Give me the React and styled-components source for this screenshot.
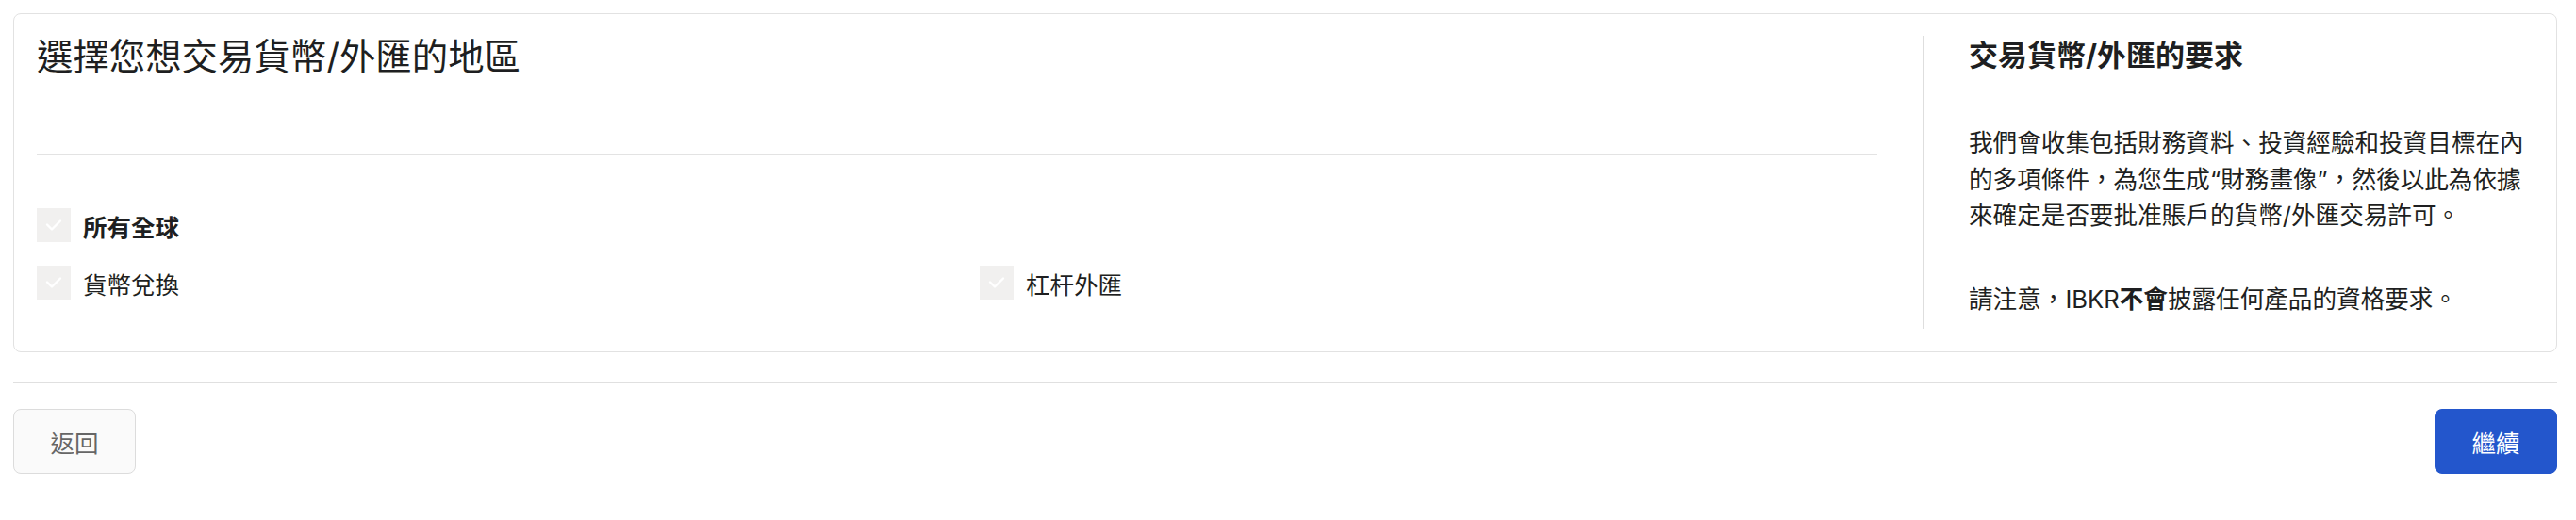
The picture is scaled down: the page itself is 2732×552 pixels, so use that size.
import React from "react";
import styled, { createGlobalStyle } from "styled-components";

const GlobalStyle = createGlobalStyle`
  html, body {
    margin: 0;
    background: #fff;
  }
  body {
    padding: 14px 20px 14px 14px;
    font-family: Inter, "Noto Sans CJK TC", sans-serif;
    color: #1e1f21;
  }
`;

const CheckIcon = () => (
  <svg width="18" height="14" viewBox="0 0 18 14" fill="none">
    <path d="M2 6.5 L7 11.5 L16 2.5" stroke="#fff" strokeWidth="2.4" strokeLinecap="round" strokeLinejoin="round" />
  </svg>
);

const Option = ({ label, bold }) => (
  <OptionRow>
    <Box>
      <CheckIcon />
    </Box>
    <OptionLabel bold={bold}>{label}</OptionLabel>
  </OptionRow>
);

const App = () => {
  return (
    <>
      <GlobalStyle />
      <Card>
        <Main>
          <Title>選擇您想交易貨幣/外匯的地區</Title>
          <Rule />
          <Options>
            <Option label="所有全球" bold />
            <OptionGrid>
              <Option label="貨幣兌換" />
              <Option label="杠杆外匯" />
            </OptionGrid>
          </Options>
        </Main>
        <VDivider />
        <Aside>
          <AsideTitle>交易貨幣/外匯的要求</AsideTitle>
          <Para>
            我們會收集包括財務資料、投資經驗和投資目標在內的多項條件，為您生成“財務畫像”，然後以此為依據來確定是否要批准賬戶的貨幣/外匯交易許可。
          </Para>
          <Para>
            請注意，IBKR<strong>不會</strong>披露任何產品的資格要求。
          </Para>
        </Aside>
      </Card>
      <Footer>
        <Button>返回</Button>
        <Button primary>繼續</Button>
      </Footer>
    </>
  );
};

export default App;

const Card = styled.section`
  display: grid;
  grid-template-columns: 1fr 1px 599px;
  column-gap: 48px;
  border: 1px solid #e2e2e2;
  border-radius: 8px;
  padding: 23px 24px 24px;
`;

const Main = styled.div`
  display: flex;
  flex-direction: column;
`;

const Title = styled.h1`
  margin: 0;
  font-size: 38.4px;
  line-height: 44px;
  font-weight: 400;
  color: #1e1f21;
`;

const Rule = styled.div`
  height: 1px;
  background: #e3e3e3;
  margin-top: 82px;
`;

const Options = styled.div`
  display: flex;
  flex-direction: column;
  gap: 25px;
  margin-top: 56px;
`;

const OptionGrid = styled.div`
  display: grid;
  grid-template-columns: 1fr 1fr;
  column-gap: 48px;
`;

const OptionRow = styled.label`
  display: flex;
  align-items: center;
  gap: 13px;
  height: 36px;
`;

const Box = styled.span`
  width: 36px;
  height: 36px;
  background: #f1f0ef;
  display: flex;
  align-items: center;
  justify-content: center;
  flex-shrink: 0;
`;

const OptionLabel = styled.span`
  font-size: 25.5px;
  font-weight: ${({ bold }) => (bold ? 700 : 400)};
  color: #1e1f21;
`;

const VDivider = styled.div`
  background: #dedede;
  width: 1px;
`;

const Aside = styled.div`
  display: flex;
  flex-direction: column;
  padding-bottom: 12px;
`;

const AsideTitle = styled.h2`
  margin: 0;
  font-size: 31px;
  line-height: 42px;
  font-weight: 700;
  color: #1e1f21;
`;

const Para = styled.p`
  margin: 53px 0 0;
  font-size: 25.6px;
  line-height: 38.5px;
  color: #1e1f21;

  & + & {
    margin-top: 50px;
  }

  strong {
    font-weight: 700;
  }
`;

const Footer = styled.footer`
  display: flex;
  justify-content: space-between;
  align-items: center;
  border-top: 1px solid #e0e0e0;
  margin-top: 32px;
  padding-top: 27px;
`;

const Button = styled.button`
  width: 130px;
  height: 69px;
  border-radius: 8px;
  font-family: Inter, "Noto Sans CJK TC", sans-serif;
  font-size: 25.5px;
  cursor: pointer;
  border: 1px solid ${({ primary }) => (primary ? "#2356cc" : "#dcdcdc")};
  background: ${({ primary }) => (primary ? "#2356cc" : "#fafafa")};
  color: ${({ primary }) => (primary ? "#fff" : "#666")};
`;
